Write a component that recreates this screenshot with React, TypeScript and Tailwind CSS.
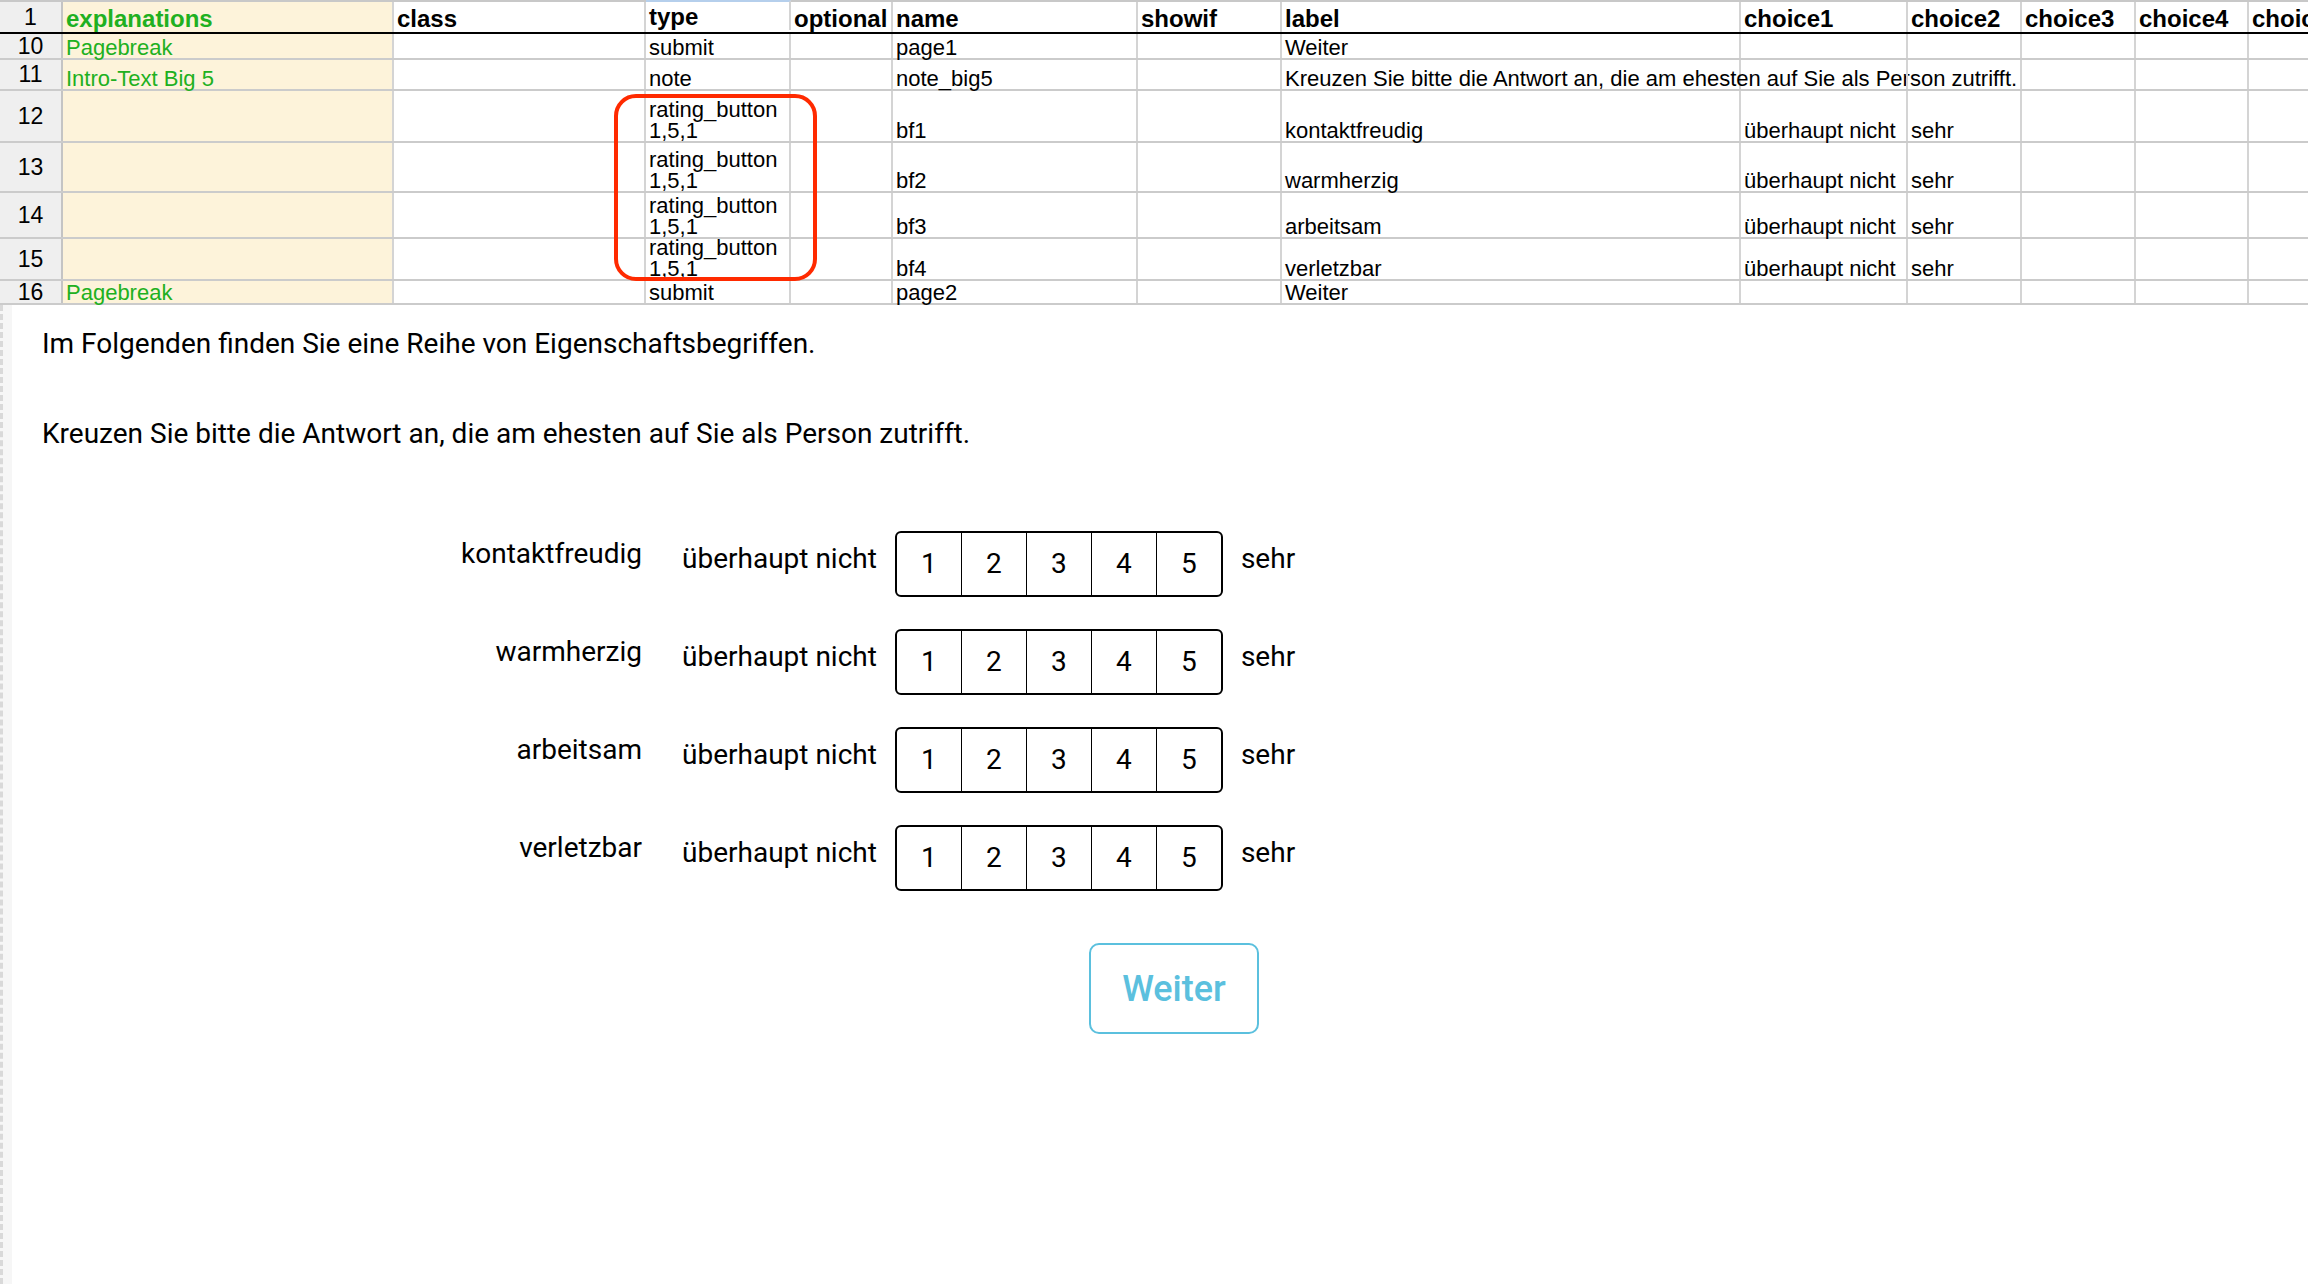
import React from "react"

// column widths of the sheet, written out so tailwind picks them up
const colW = [
  "w-[63px]",
  "w-[331px]",
  "w-[252px]",
  "w-[145px]",
  "w-[102px]",
  "w-[245px]",
  "w-[144px]",
  "w-[459px]",
  "w-[167px]",
  "w-[114px]",
  "w-[114px]",
  "w-[113px]",
  "w-[80px]",
]

const header = ["1", "explanations", "class", "type", "optional", "name", "showif", "label", "choice1", "choice2", "choice3", "choice4", "choice5"]

const rows: { h: string; cells: string[] }[] = [
  { h: "h-[26px]", cells: ["10", "Pagebreak", "", "submit", "", "page1", "", "Weiter", "", "", "", "", ""] },
  {
    h: "h-[31px]",
    cells: ["11", "Intro-Text Big 5", "", "note", "", "note_big5", "", "Kreuzen Sie bitte die Antwort an, die am ehesten auf Sie als Person zutrifft.", "", "", "", "", ""],
  },
  { h: "h-[52px]", cells: ["12", "", "", "rating_button\n1,5,1", "", "bf1", "", "kontaktfreudig", "überhaupt nicht", "sehr", "", "", ""] },
  { h: "h-[50px]", cells: ["13", "", "", "rating_button\n1,5,1", "", "bf2", "", "warmherzig", "überhaupt nicht", "sehr", "", "", ""] },
  { h: "h-[46px]", cells: ["14", "", "", "rating_button\n1,5,1", "", "bf3", "", "arbeitsam", "überhaupt nicht", "sehr", "", "", ""] },
  { h: "h-[42px]", cells: ["15", "", "", "rating_button\n1,5,1", "", "bf4", "", "verletzbar", "überhaupt nicht", "sehr", "", "", ""] },
  { h: "h-[24px]", cells: ["16", "Pagebreak", "", "submit", "", "page2", "", "Weiter", "", "", "", "", ""] },
]

const items = ["kontaktfreudig", "warmherzig", "arbeitsam", "verletzbar"]

function Sheet() {
  return (
    <div className="relative font-[family-name:'Liberation_Sans',Arial,sans-serif] text-black">
      {/* header row */}
      <div className="flex h-[34px] border-t-2 border-b-2 border-t-[#c8c8c8] border-b-black">
        {header.map((t, i) => (
          <div
            key={i}
            className={`${colW[i]} shrink-0 flex h-full ${
              i === 0
                ? "items-center justify-center bg-[#efefef] border-r-2 border-[#c4c4c4] text-[23px]"
                : "items-end px-[3px] pb-[1px] border-r-2 border-[#d4d4d4] text-[24px] font-bold leading-[24px] whitespace-nowrap"
            } ${i === 1 ? "bg-[#fdf3da] text-[#20b020]" : ""} ${i === 3 ? "border-t-2 border-t-[#b5cfec] -mt-[2px]" : ""}`}
          >
            {t}
          </div>
        ))}
      </div>

      {rows.map((r, ri) => (
        <div key={ri} className={`flex ${r.h} border-b-2 border-[#cbcbcb]`}>
          {r.cells.map((t, i) => (
            <div
              key={i}
              className={`${colW[i]} shrink-0 flex h-full ${
                i === 0
                  ? "items-center justify-center bg-[#efefef] border-r-2 border-[#c4c4c4] text-[23px]"
                  : "items-end px-[3px] border-r-2 border-[#d4d4d4] text-[22px] leading-[21px] whitespace-pre"
              } ${i === 1 ? "bg-[#fdf3da] text-[#20b020]" : ""}`}
            >
              {t}
            </div>
          ))}
        </div>
      ))}

      {/* annotation around the rating_button cells */}
      <div className="absolute left-[614px] top-[94px] w-[203px] h-[187px] rounded-[22px] border-4 border-[#ff2a00]" />
    </div>
  )
}

function RatingRow({ label }: { label: string }) {
  return (
    <div className="flex h-[66px] items-start mb-[32px]">
      <div className="w-[600px] text-right pt-[7px] leading-[32px]">{label}</div>
      <div className="ml-[40px] pt-[12px] leading-[32px] whitespace-nowrap">überhaupt nicht</div>
      <div className="ml-[18px] flex h-[66px] w-[328px] rounded-[6px] border-2 border-black">
        {[1, 2, 3, 4, 5].map((n) => (
          <div
            key={n}
            className={`flex flex-1 items-center justify-center text-[28px] ${n > 1 ? "border-l-[1.5px] border-black" : ""}`}
          >
            {n}
          </div>
        ))}
      </div>
      <div className="ml-[18px] pt-[12px] leading-[32px]">sehr</div>
    </div>
  )
}

export default function App() {
  return (
    <div className="relative w-[2308px] h-[1284px] overflow-hidden bg-white">
      <Sheet />

      {/* Preview of the survey page */}
      <div className="flex h-[979px]">
        <div className="w-[12px] shrink-0 border-l-[3px] border-dashed border-[#d9d9d9] bg-[#f6f6f6]" />
        <div className="flex-1 pl-[30px] font-[family-name:Roboto,sans-serif] text-[28px] text-black">
          <p className="mt-[19px] leading-[40px]">Im Folgenden finden Sie eine Reihe von Eigenschaftsbegriffen.</p>
          <p className="mt-[50px] leading-[40px]">Kreuzen Sie bitte die Antwort an, die am ehesten auf Sie als Person zutrifft.</p>

          <div className="mt-[77px]">
            {items.map((it) => (
              <RatingRow key={it} label={it} />
            ))}
          </div>

          <button className="mt-[52px] ml-[1047px] flex h-[91px] w-[170px] items-center justify-center rounded-[10px] border-2 border-[#5bc0de] text-[36px] font-medium text-[#5bc0de]">
            Weiter
          </button>
        </div>
      </div>
    </div>
  )
}
